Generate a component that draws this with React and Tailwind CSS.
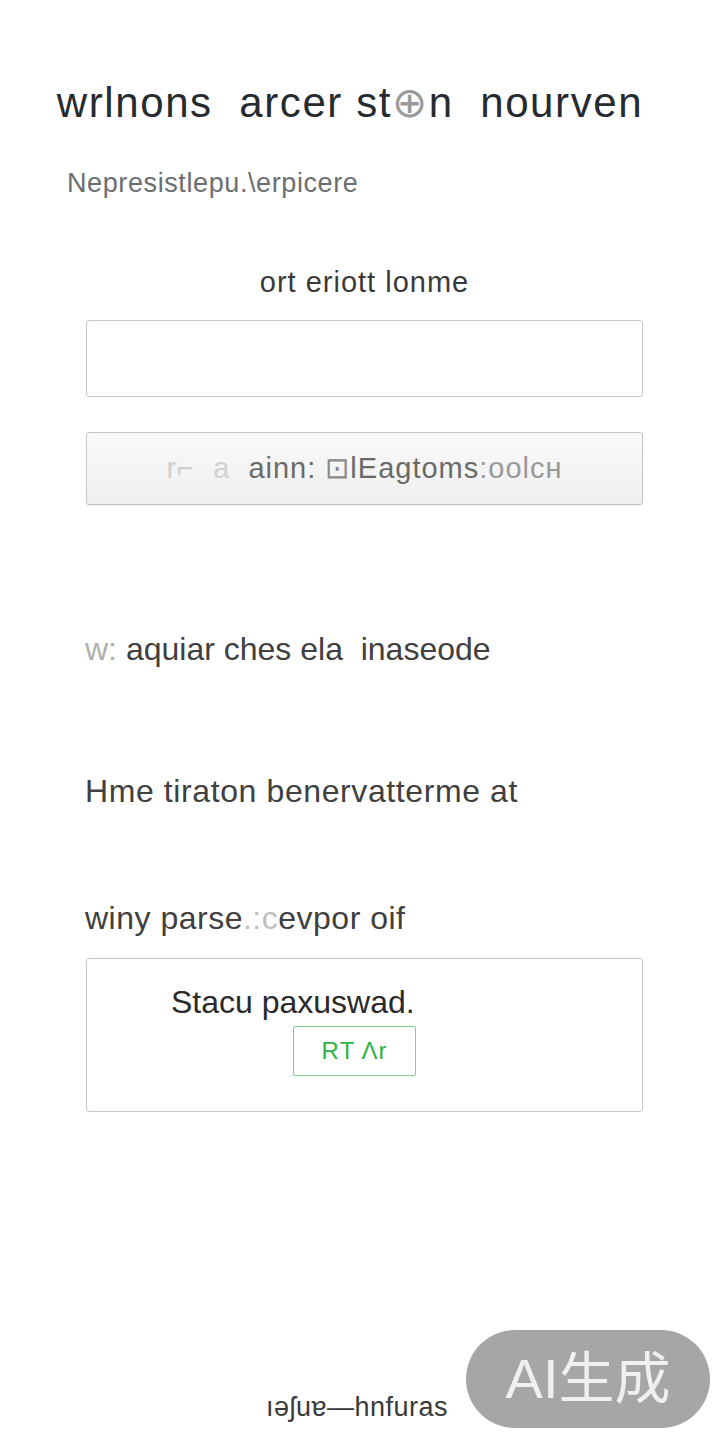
import React from "react";

const App = () => {
  return (
    <div className="relative w-[720px] min-h-[1440px] bg-white" style={{ fontFamily: '"Liberation Sans", Arial, sans-serif' }}>
      <main className="flex flex-col pt-[80px]">
        <h1 className="pr-[20px] text-center text-[42px] leading-[46px] tracking-[1.6px] text-[#262b30]">
          wrlnons&nbsp; arcer st<span className="text-[#9a9a9a]">⊕</span>n&nbsp; nourven
        </h1>
        <p className="mt-[40px] pl-[67px] text-[27px] leading-[34px] tracking-[0.6px] text-[#6b6e70]">
          Nepresistlepu.\erpicere
        </p>

        <section className="mt-[66px] pl-[86px] pr-[77px] flex flex-col">
          <p className="text-center text-[29px] leading-[32px] tracking-[1px] text-[#3a3a3a]">ort eriott lonme</p>
          <input
            type="text"
            className="mt-[22px] h-[77px] w-full rounded-[3px] border border-[#c9c9c9] bg-white outline-none"
          />
          <button className="mt-[35px] h-[73px] w-full rounded-[3px] border border-[#c6c6c6] bg-gradient-to-b from-[#fafafa] to-[#efefef] text-[29px] tracking-[1px] text-[#6a6a6a] shadow-[0_1px_1px_rgba(0,0,0,0.08)]">
            <span className="text-[#d0d0d0]">r⌐&nbsp; a</span>&nbsp; ainn: <span className="text-[#8a8a8a]">⊡</span>lEagtoms<span className="text-[#9a9a9a]">:oolcн</span>
          </button>
        </section>

        <section className="mt-[125px] px-[85px] flex flex-col text-[32px] leading-[38px] text-[#404040]">
          <p><span className="text-[#b0b0b0]">w:</span> aquiar ches ela&nbsp; inaseode</p>
          <p className="mt-[104px] tracking-[0.6px]">Hme tiraton benervatterme at</p>
          <p className="mt-[89px] tracking-[0.5px]">winy parse<span className="text-[#c0c0c0]">.:c</span>evpor oif</p>
        </section>

        <section className="mt-[21px] ml-[86px] mr-[77px] h-[154px] rounded-[3px] border border-[#c9c9c9] bg-white flex flex-col">
          <p className="mt-[24px] pl-[84px] text-[32px] leading-[38px] text-[#2a2a2a]">Stacu paxuswad.</p>
          <div className="mt-[5px] ml-[206px] w-[123px] h-[50px] border border-[#7fd08a] rounded-[2px] flex items-center justify-center text-[24px] text-[#2fb344] tracking-[1px]">
            RΤ Λr
          </div>
        </section>
      </main>

      <footer className="absolute left-0 right-0 top-[1392px] pr-[6px] text-center text-[27px] leading-[30px] tracking-[0.5px] text-[#3a3a3a]">
        ıǝʃuɐ—hnfuras
      </footer>

      <div className="absolute left-[466px] top-[1330px] w-[244px] h-[98px] rounded-full bg-[#a6a6a6] flex items-center justify-center text-[56px] text-[#f0f0f0]" style={{ fontFamily: '"Liberation Sans", "Noto Sans CJK SC", sans-serif' }}>
        AI生成
      </div>
    </div>
  );
};

export default App;
